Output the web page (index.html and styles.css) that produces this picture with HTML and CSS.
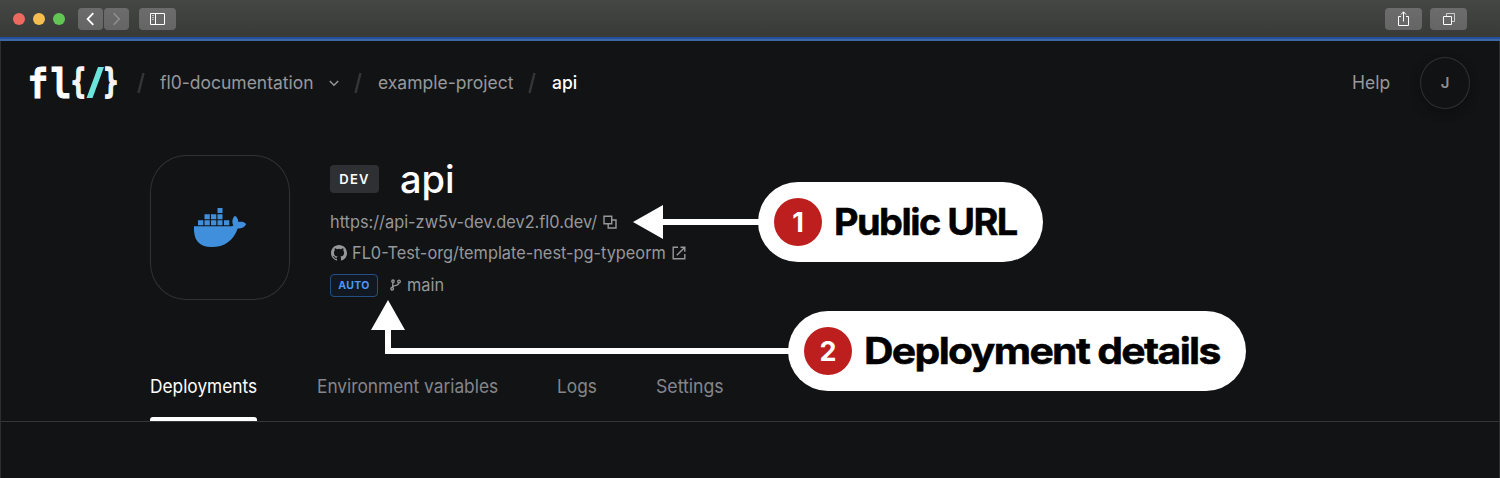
FILE: index.html
```html
<!DOCTYPE html>
<html lang="en">
<head>
<meta charset="utf-8">
<title>FL0 – api</title>
<link rel="stylesheet" href="styles.css">
</head>
<body>
<div class="titlebar">
  <div class="lights"><i class="red"></i><i class="yellow"></i><i class="green"></i></div>
  <div class="nav-buttons">
    <span class="tb-btn nav"><svg width="25" height="22" viewBox="0 0 25 22"><path d="M15.3 5.2 9.6 11l5.7 5.8" stroke="#fff" stroke-width="1.8"/></svg></span>
    <span class="tb-btn nav"><svg width="25" height="22" viewBox="0 0 25 22"><path d="m9.6 5.2 5.7 5.8-5.7 5.8" stroke="#8f8f8f" stroke-width="1.6"/></svg></span>
  </div>
  <span class="tb-btn"><svg width="37" height="22" viewBox="0 0 37 22"><path d="M11.5 5.5h14v11h-14zM16.5 5.5v11" stroke="#fff"/><path d="M13 7.5h2M13 9.5h2M13 11.5h2" stroke="#bbb"/></svg></span>
  <div class="tb-right">
    <span class="tb-btn"><svg width="37" height="22" viewBox="0 0 37 22"><path d="M16 8.500h-2.500v9h10v-9H21M18.500 13.500V4M16 6.500l2.500-2.700L21 6.500" stroke="#fff"/></svg></span>
    <span class="tb-btn"><svg width="37" height="22" viewBox="0 0 37 22"><path d="M13.500 8.500h8v8h-8z" stroke="#fff"/><path d="M16.500 8V5.500h8v8H22" stroke="#ccc"/></svg></span>
  </div>
</div>
<div class="page">
  <header class="header">
    <svg class="logo" width="90" height="64" viewBox="0 -12 90 64">
      <text class="logo-text" transform="translate(-1.500 35) scale(.84 1)">f</text>
      <text class="logo-text" transform="translate(21.500 35) scale(.84 1)">l</text>
      <text class="logo-brace" transform="translate(42 30) scale(.74 1)">{</text>
      <path d="M57.500 35h6l11.500-31h-6z" fill="#6be5dc"/>
      <text class="logo-brace" transform="translate(74.500 30) scale(.74 1)">}</text>
    </svg>
    <nav class="crumbs">
      <svg class="slash" width="8" height="22" viewBox="0 0 8 22"><path d="M6.500 1 1.500 21"/></svg>
      <span class="crumb org">fl0-documentation</span>
      <svg class="chevron" width="12" height="8" viewBox="0 0 12 8"><path d="m1.800 2 4.200 4.200L10.200 2"/></svg>
      <svg class="slash" width="8" height="22" viewBox="0 0 8 22"><path d="M6.500 1 1.500 21"/></svg>
      <span class="crumb project">example-project</span>
      <svg class="slash" width="8" height="22" viewBox="0 0 8 22"><path d="M6.500 1 1.500 21"/></svg>
      <span class="crumb current">api</span>
    </nav>
    <span class="help">Help</span>
    <span class="avatar">J</span>
  </header>
  <section class="service">
    <div class="tile">
      <svg width="54" height="40" viewBox="0 0 54 40" fill="#3f8fdd"><path d="M24.500 1h5v5h-5zM11.500 7.200h5.300v5h-5.300zM18 7.200h5.300v5H18zM24.500 7.200h5v5h-5zM5 13.300h5.300v4.900H5zM11.500 13.300h5.300v4.900h-5.300zM18 13.300h5.300v4.900H18zM24.500 13.300h5v4.900h-5zM31 13.300h5.300v4.900H31z"/><path d="M1 19.200h37c1.500 0 2-.4 2.200-1-1.400-3-1-6.900 1.700-9.400 2.600 1.600 3.600 4 3.300 6.300 3-.7 5.800-.3 8 1.800-1.500 3.500-4.800 4.700-8.500 4.500C40.500 33.500 31.500 40 18.500 40 6 40 .2 33 1 19.200z"/></svg>
    </div>
    <div class="info">
      <div class="title-row"><span class="badge-dev">DEV</span><h1>api</h1></div>
      <div class="row url"><span class="url-text">https://api-zw5v-dev.dev2.fl0.dev/</span>
        <svg width="14" height="14" viewBox="0 0 14 14"><path d="M1 1.200h7.700v7.600H1zM8.700 5H13v8H5.200V8.800" fill="none" stroke="#97989b" stroke-width="1.400"/></svg></div>
      <div class="row repo">
        <svg width="16" height="16" viewBox="0 0 16 16"><path fill="#97989b" d="M8 0C3.580 0 0 3.580 0 8c0 3.540 2.290 6.530 5.470 7.590.4.070.55-.17.55-.38 0-.19-.01-.82-.01-1.490-2.010.37-2.530-.49-2.690-.94-.09-.23-.48-.94-.82-1.130-.28-.15-.68-.52-.01-.53.63-.01 1.080.58 1.230.82.72 1.210 1.870.87 2.330.66.070-.52.28-.87.51-1.070-1.780-.2-3.640-.89-3.640-3.950 0-.87.31-1.590.82-2.150-.08-.2-.36-1.020.08-2.120 0 0 .67-.21 2.200.82a7.600 7.600 0 0 1 4 0c1.530-1.040 2.200-.82 2.200-.82.44 1.100.16 1.920.08 2.120.51.56.82 1.270.82 2.150 0 3.070-1.870 3.750-3.650 3.950.29.25.54.73.54 1.480 0 1.070-.01 1.930-.01 2.200 0 .21.150.46.55.38A8 8 0 0 0 16 8c0-4.420-3.580-8-8-8z"/></svg>
        <span class="repo-text">FL0-Test-org/template-nest-pg-typeorm</span>
        <svg width="14" height="14" viewBox="0 0 14 14"><path d="M6 1.200H1.200v11.600h11.600V8M8.500 1.200h4.300v4.500M12.600 1.400 4.800 9.200" fill="none" stroke="#97989b" stroke-width="1.400"/></svg></div>
      <div class="row branch"><span class="badge-auto">AUTO</span>
        <svg width="11" height="12" viewBox="0 0 11 12"><g fill="none" stroke="#97989b" stroke-width="1.300"><circle cx="2.200" cy="9.800" r="1.300"/><circle cx="3" cy="2.200" r="1.200"/><circle cx="9" cy="2.500" r="1.300"/><path d="M3 3.500 2.400 8.500M8.800 3.800C8.600 6.300 7 6.500 5 6.700 3.700 6.900 3 7.300 2.600 8.500"/></g></svg>
        <span class="branch-text">main</span></div>
    </div>
  </section>
  <nav class="tabs">
    <span class="tab active"><span class="tab-label">Deployments</span></span>
    <span class="tab env"><span class="tab-label">Environment variables</span></span>
    <span class="tab logs"><span class="tab-label">Logs</span></span>
    <span class="tab settings"><span class="tab-label">Settings</span></span>
  </nav>
</div>
<svg class="arrows" width="1500" height="478" viewBox="0 0 1500 478" fill="#fff"><path d="M633 222l30-17v14h100v6H663v14zM388 300l17 30h-14v18h402v6H385v-24h-14z"/></svg>
<div class="callout first"><span class="num">1</span><span class="label">Public URL</span></div>
<div class="callout second"><span class="num">2</span><span class="label">Deployment details</span></div>
</body>
</html>
```
FILE: styles.css
```css
* { box-sizing: border-box; }
body { margin: 0; width: 1500px; height: 478px; overflow: hidden; background: #121315; font-family: Inter, sans-serif; color: #97989b; position: relative; }
svg { display: block; flex: none; }
span { white-space: nowrap; }

.titlebar { height: 37px; display: flex; align-items: center; padding: 1px 33px 0 13px; background: linear-gradient(#454745, #383a38); }
.lights { display: flex; gap: 8px; width: 65px; }
.lights i { width: 12px; height: 12px; border-radius: 50%; }
.red { background: #ed6a5f; }
.yellow { background: #f6be50; }
.green { background: #62c655; }
.nav-buttons { display: flex; gap: 1px; margin-right: 10px; }
.tb-btn { display: flex; width: 37px; height: 22px; border-radius: 4px; background: linear-gradient(#6c6c6c, #656565); }
.tb-btn.nav { width: 25px; }
.tb-btn svg { fill: none; }
.tb-right { display: flex; gap: 8px; margin-left: auto; }

.page { height: 441px; border: solid #2c2e30; border-width: 0 1px; position: relative; }
.page::before { content: ""; display: block; height: 4px; margin: 0 -1px; background: linear-gradient(#27509a 50%, #3c68a4 50%); }
.header { height: 83px; display: flex; align-items: center; padding: 0 29px 0 28px; }
.logo { margin-right: 18px; }
.logo-text, .logo-brace { font-family: "DejaVu Sans Mono", monospace; font-weight: 700; fill: #fff; }
.logo-text { font-size: 41px; stroke: #fff; stroke-width: .8; }
.logo-brace { font-size: 33px; fill: #f3f3f3; stroke: #f3f3f3; stroke-width: 1.600; }
.crumbs { display: flex; align-items: center; font-size: 18px; }
.crumb { transform: scaleX(.972); transform-origin: left; }
.slash { stroke: #343538; stroke-width: 2.500; fill: none; }
.org { width: 154px; margin: 0 14px 0 15px; }
.chevron { stroke: #97989b; stroke-width: 1.500; fill: none; margin-right: 14px; }
.project { width: 135px; margin: 0 15px 0 16px; }
.current { margin-left: 16px; color: #fff; font-weight: 500; }
.help { margin-left: auto; font-size: 18px; margin-right: 30px; transform: scaleX(.972); transform-origin: right; }
.avatar { width: 50px; height: 52px; border: 1px solid #303134; border-radius: 50%; display: grid; place-items: center; font-size: 15px; font-weight: 600; color: #8e8f91; background: #111213; box-shadow: 0 4px 10px #0d0e0f; }

.service { display: flex; padding: 31px 0 0 149px; }
.tile { width: 140px; height: 145px; border: 1px solid #303134; border-radius: 36px / 37px; display: grid; place-items: center; padding-bottom: 1px; }
.info { margin-left: 40px; padding-top: 1px; }
.title-row { display: flex; align-items: center; height: 46px; }
.badge-dev { width: 49px; height: 28px; border-radius: 4px; background: #2f3033; color: #fff; font-size: 13px; font-weight: 600; letter-spacing: 1.200px; display: grid; place-items: center; }
h1 { margin: 0 0 0 21px; font-size: 38px; font-weight: 500; color: #fff; line-height: 46px; }
.row { display: flex; align-items: center; height: 31px; font-size: 17px; }
.url-text, .repo-text, .branch-text { transform: scaleX(.96); transform-origin: left; }
.url { height: 40px; gap: 7px; }
.url-text { width: 266px; }
.repo { height: 22px; padding-left: 1px; gap: 5px; }
.repo-text { width: 314px; margin-right: 1px; }
.branch { height: 42px; }
.badge-auto { width: 48px; height: 23px; border: 1px solid #254f83; border-radius: 4px; background: #111821; color: #4997f4; font-size: 10.500px; font-weight: 700; letter-spacing: .400px; display: grid; place-items: center; margin-right: 12px; }
.branch-text { margin-left: 6px; }

.tabs { display: flex; height: 69px; margin-top: 47px; padding-left: 149px; border-bottom: 1px solid #363739; font-size: 18.500px; color: #85868a; gap: 60px; }
.tab { height: 69px; line-height: 67px; }
.tab-label { display: block; transform: scaleX(.935); transform-origin: left; }
.active { width: 107px; color: #fff; position: relative; }
.active::after { content: ""; position: absolute; left: 0; right: 0; bottom: 1px; height: 4px; border-radius: 3px 3px 0 0; background: #fff; }
.env { width: 180px; }
.logs { width: 39px; }
.settings .tab-label { transform: scaleX(.955); }

.arrows { position: absolute; left: 0; top: 0; }
.callout { position: absolute; height: 80px; border-radius: 40px; background: #fff; display: flex; align-items: center; padding-left: 16px; }
.first { left: 758px; top: 182px; width: 285px; }
.second { left: 788px; top: 311px; width: 458px; }
.num { width: 48px; height: 48px; border-radius: 50%; background: #bd1e1e; color: #fff; display: grid; place-items: center; font-size: 27px; font-weight: 700; }
.label { margin: 0 0 1px 12px; color: #000; font-size: 37px; font-weight: 700; letter-spacing: -1.500px; transform-origin: left; -webkit-text-stroke: .5px #000; }
.first .label { transform: scaleX(1.025); }
.second .label { transform: scaleX(1.105); }
```
